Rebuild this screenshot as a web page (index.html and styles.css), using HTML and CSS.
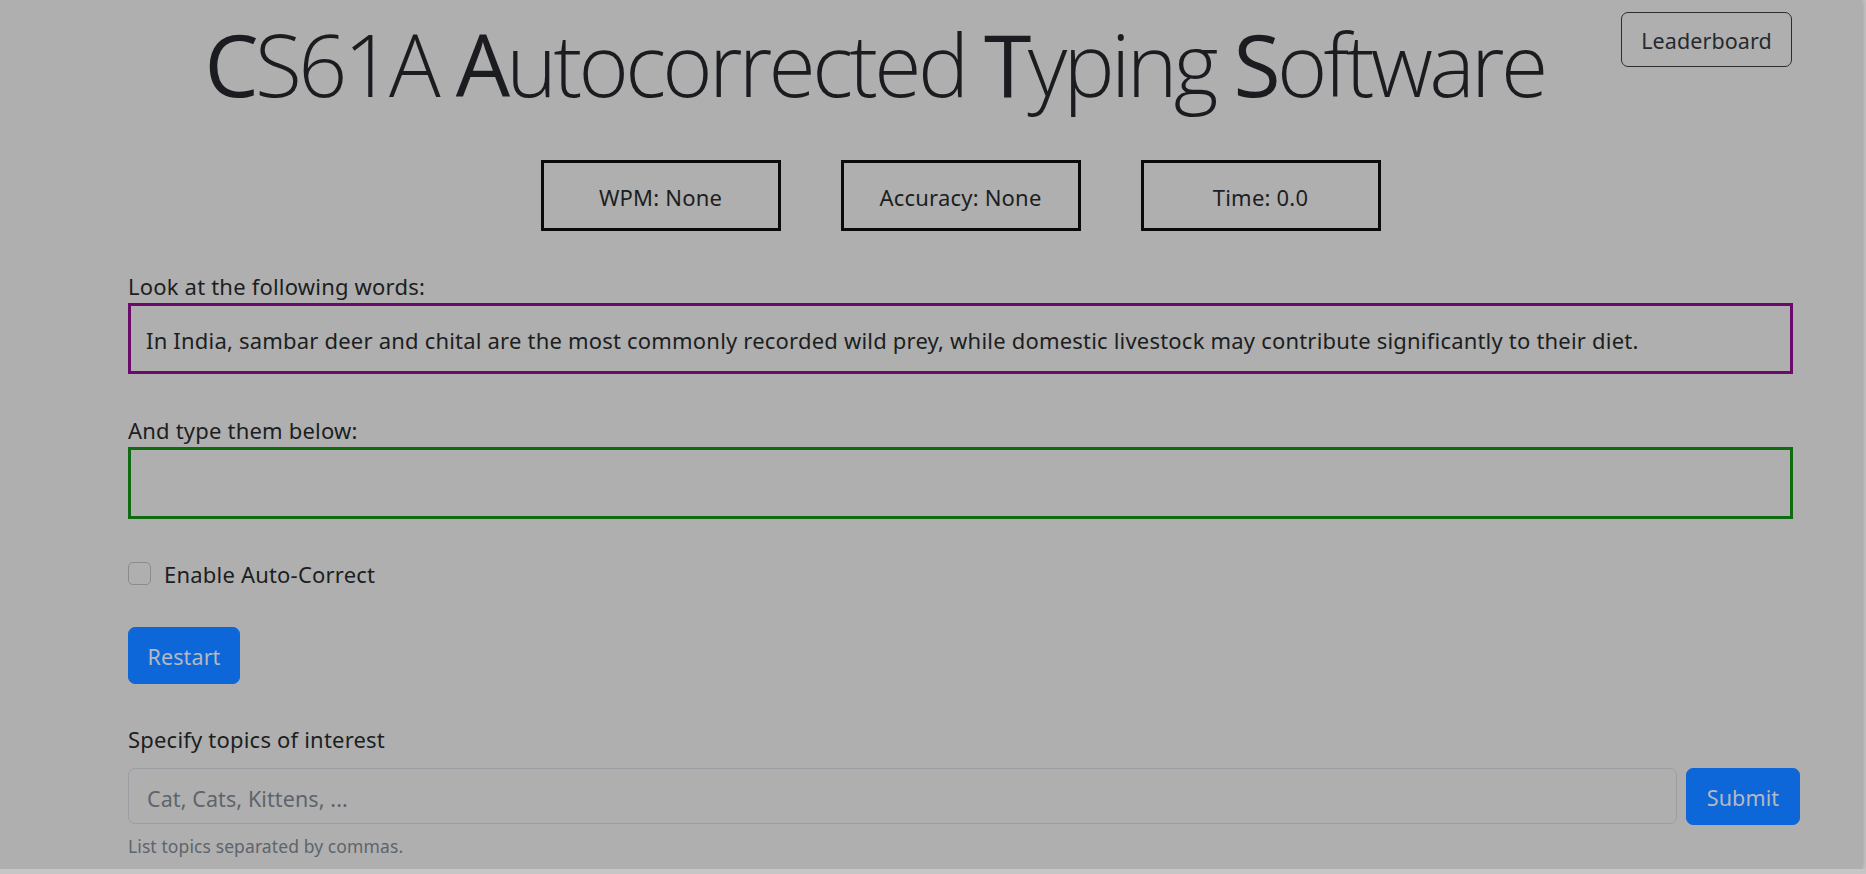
FILE: index.html
```html
<!DOCTYPE html>
<html lang="en">
<head>
<meta charset="utf-8">
<title>CS61A Autocorrected Typing Software</title>
<link rel="stylesheet" href="styles.css">
</head>
<body>
<div class="window">
  <div class="container">
    <header class="top">
      <h1 class="title"><span class="cap">C</span>S61A <span class="cap">A</span>utocorrected <span class="cap">T</span>yping <span class="cap">S</span>oftware</h1>
      <button class="btn btn-outline">Leaderboard</button>
    </header>

    <div class="stats">
      <div class="stat">WPM: None</div>
      <div class="stat">Accuracy: None</div>
      <div class="stat">Time: 0.0</div>
    </div>

    <div class="label">Look at the following words:</div>
    <div class="prompt">In India, sambar deer and chital are the most commonly recorded wild prey, while domestic livestock may contribute significantly to their diet.</div>

    <div class="label label-gap">And type them below:</div>
    <div class="typed"></div>

    <label class="check">
      <span class="check-box"></span>
      <span class="check-label">Enable Auto-Correct</span>
    </label>

    <button class="btn btn-primary btn-restart">Restart</button>

    <div class="label label-topics">Specify topics of interest</div>
    <div class="input-group">
      <input class="topic-input" type="text" placeholder="Cat, Cats, Kittens, ...">
      <button class="btn btn-primary btn-submit">Submit</button>
    </div>
    <div class="form-text">List topics separated by commas.</div>
  </div>
</div>
</body>
</html>
```
FILE: styles.css
```css
html, body {
  margin: 0;
  padding: 0;
}
body {
  background: #c6c6c6;
  font-family: "Noto Sans", "Open Sans", sans-serif;
  font-size: 22px;
  letter-spacing: 0.2px;
  line-height: 1.5;
  color: #1c1e21;
  overflow: hidden;
}
.window {
  width: 1862px;
  height: 869px;
  background: #afafaf;
  box-shadow: 0 0 6px rgba(0, 0, 0, 0.28);
  overflow: hidden;
}
.container {
  margin-left: 128px;
  width: 1665px;
}
.top {
  display: flex;
  align-items: flex-start;
  padding-top: 12px;
}
.title {
  flex: 1;
  margin: 0;
  text-align: center;
  font-family: "Open Sans", "Noto Sans", sans-serif;
  font-weight: 300;
  font-size: 86px;
  letter-spacing: -3.7px;
  line-height: 1.2;
  color: #1a1c1f;
}
.cap {
  font-weight: 400;
}
.btn {
  box-sizing: border-box;
  font-family: "Noto Sans", "Open Sans", sans-serif;
  font-size: 21.5px;
  letter-spacing: 0.1px;
  line-height: 1;
  border-radius: 7px;
  cursor: pointer;
  padding: 3px 0 0;
}
.btn-outline {
  height: 55px;
  width: 171px;
  margin-right: 1px;
  padding-top: 2px;
  background: transparent;
  border: 1.5px solid #2a2e32;
  color: #262a2e;
}
.btn-primary {
  background: #0e67d8;
  border: 1px solid #0e67d8;
  color: #b6b9c1;
}
.stats {
  display: flex;
  justify-content: center;
  gap: 60px;
  margin-top: 45px;
}
.stat {
  box-sizing: border-box;
  width: 240px;
  height: 71px;
  border: 3px solid #0a0a0a;
  padding-top: 3px;
  display: flex;
  align-items: center;
  justify-content: center;
}
.label {
  margin-top: 39px;
}
.label-gap {
  margin-top: 40px;
}
.prompt {
  box-sizing: border-box;
  height: 71px;
  border: 3px solid #6b0a6b;
  padding: 4px 0 0 15px;
  display: flex;
  align-items: center;
}
.typed {
  box-sizing: border-box;
  height: 72px;
  border: 3px solid #0f6a10;
}
.check {
  display: flex;
  align-items: center;
  gap: 13px;
  margin-top: 39px;
  height: 33px;
}
.check-box {
  box-sizing: border-box;
  width: 23px;
  height: 23px;
  border: 1.5px solid #898b8e;
  border-radius: 5px;
  margin-top: -2px;
}
.btn-restart {
  display: block;
  margin-top: 36px;
  width: 112px;
  height: 57px;
}
.label-topics {
  margin-top: 39px;
}
.input-group {
  display: flex;
  gap: 9px;
  width: 1672px;
  margin-top: 12px;
}
.topic-input {
  box-sizing: border-box;
  flex: 1;
  height: 56px;
  border: 1.5px solid #9a9da1;
  border-radius: 7px;
  background: transparent;
  padding: 4px 18px 0;
  font-family: "Noto Sans", "Open Sans", sans-serif;
  font-size: 21.5px;
  letter-spacing: 0.1px;
  color: #1c1e21;
  outline: none;
}
.topic-input::placeholder {
  color: #5e646c;
}
.btn-submit {
  width: 114px;
  height: 57px;
}
.form-text {
  margin-top: 8px;
  font-size: 17.5px;
  letter-spacing: 0.1px;
  color: #5e646c;
}
```
